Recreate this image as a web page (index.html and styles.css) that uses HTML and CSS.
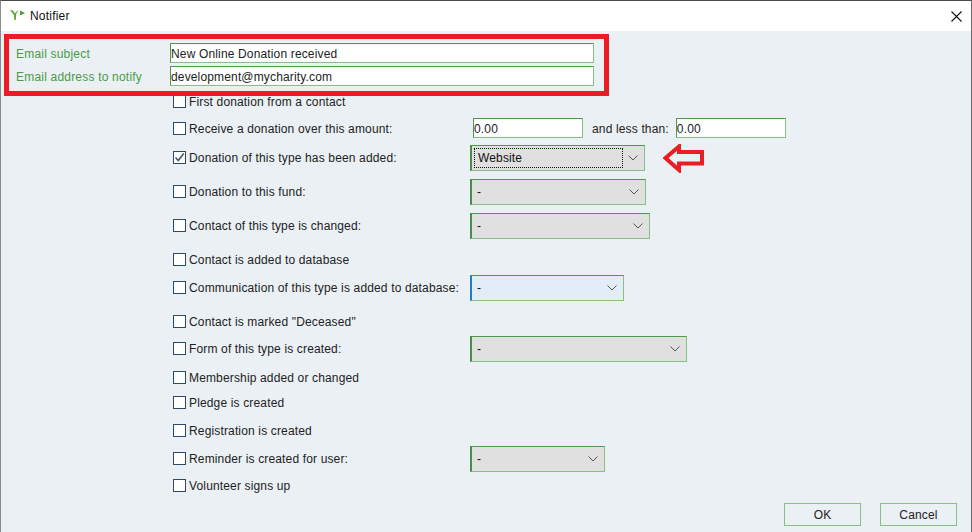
FILE: index.html
```html
<!DOCTYPE html>
<html lang="en" dir="ltr">
<head>
  <meta charset="utf-8">
  <title>Notifier</title>
  <link rel="stylesheet" href="styles.css">
</head>
<body>

  <div class="window">
    <div class="titlebar">
      <svg class="app-icon" width="16" height="12" viewBox="0 0 16 12">
        <path d="M0 1 L3 1.5 L5 4.5 L7 2 L8.5 1 L6.2 5 L5.8 11 L4.4 11 L4 6 L2 3.5 Z" fill="#5aa532"/>
        <path d="M10 1.5 L15 4 L10 6.5 Z" fill="#4d9a3c"/>
      </svg>
      <span class="title">Notifier</span>
      <svg class="close" width="11" height="11" viewBox="0 0 11 11">
        <path d="M0.5 0.5 L10.5 10.5 M10.5 0.5 L0.5 10.5" stroke="#111" stroke-width="1.1" fill="none"/>
      </svg>
    </div>

    <div class="content">
      <div class="highlight"></div>
      <svg class="red-arrow" width="42" height="29" viewBox="0 0 42 29">
        <path d="M16 2.5 L2.5 14 L16 26 L16 19.5 L39 19.5 L39 8 L16 8 Z" fill="none" stroke="#ed1c24" stroke-width="4"/>
      </svg>

      <div class="field">
        <label>Email subject</label>
        <input type="text" class="text wide" value="New Online Donation received">
      </div>
      <div class="field">
        <label>Email address to notify</label>
        <input type="text" class="text wide" value="development@mycharity.com">
      </div>

      <div class="options">
        <div class="row first">
          <span class="check"></span><span class="opt">First donation from a contact</span>
        </div>
        <div class="row gap27">
          <span class="check"></span><span class="opt">Receive a donation over this amount:</span>
          <input type="text" class="text amount first-amount" value="0.00">
          <span class="less">and less than:</span>
          <input type="text" class="text amount" value="0.00">
        </div>
        <div class="row gap29">
          <span class="check checked">
            <svg width="11" height="11" viewBox="0 0 11 11"><path d="M1.5 5.5 L4.2 8.5 L9.8 1.5" fill="none" stroke="#44586c" stroke-width="1.6"/></svg>
          </span><span class="opt">Donation of this type has been added:</span>
          <div class="select w175 focused"><span class="dotted">Website</span><svg class="chev" width="10" height="6" viewBox="0 0 10 6"><path d="M0.5 0.5 L5 5 L9.5 0.5" fill="none" stroke="#555" stroke-width="1"/></svg></div>
        </div>
        <div class="row gap34">
          <span class="check"></span><span class="opt">Donation to this fund:</span>
          <div class="select w176"><span>-</span><svg class="chev" width="10" height="6" viewBox="0 0 10 6"><path d="M0.5 0.5 L5 5 L9.5 0.5" fill="none" stroke="#555" stroke-width="1"/></svg></div>
        </div>
        <div class="row gap34">
          <span class="check"></span><span class="opt">Contact of this type is changed:</span>
          <div class="select w180"><span>-</span><svg class="chev" width="10" height="6" viewBox="0 0 10 6"><path d="M0.5 0.5 L5 5 L9.5 0.5" fill="none" stroke="#555" stroke-width="1"/></svg></div>
        </div>
        <div class="row gap34">
          <span class="check"></span><span class="opt">Contact is added to database</span>
        </div>
        <div class="row gap28">
          <span class="check"></span><span class="opt">Communication of this type is added to database:</span>
          <div class="select w154 active"><span>-</span><svg class="chev" width="10" height="6" viewBox="0 0 10 6"><path d="M0.5 0.5 L5 5 L9.5 0.5" fill="none" stroke="#555" stroke-width="1"/></svg></div>
        </div>
        <div class="row gap34">
          <span class="check"></span><span class="opt">Contact is marked "Deceased"</span>
        </div>
        <div class="row gap27">
          <span class="check"></span><span class="opt">Form of this type is created:</span>
          <div class="select w217"><span>-</span><svg class="chev" width="10" height="6" viewBox="0 0 10 6"><path d="M0.5 0.5 L5 5 L9.5 0.5" fill="none" stroke="#555" stroke-width="1"/></svg></div>
        </div>
        <div class="row gap29">
          <span class="check"></span><span class="opt">Membership added or changed</span>
        </div>
        <div class="row gap25">
          <span class="check"></span><span class="opt">Pledge is created</span>
        </div>
        <div class="row gap28">
          <span class="check"></span><span class="opt">Registration is created</span>
        </div>
        <div class="row gap28">
          <span class="check"></span><span class="opt">Reminder is created for user:</span>
          <div class="select w135"><span>-</span><svg class="chev" width="10" height="6" viewBox="0 0 10 6"><path d="M0.5 0.5 L5 5 L9.5 0.5" fill="none" stroke="#555" stroke-width="1"/></svg></div>
        </div>
        <div class="row gap27">
          <span class="check"></span><span class="opt">Volunteer signs up</span>
        </div>
      </div>

      <div class="buttons">
        <button class="btn">OK</button>
        <button class="btn">Cancel</button>
      </div>
    </div>
  </div>

</body>
</html>
```

FILE: styles.css
```css
* {
  padding: 0;
  margin: 0;
  box-sizing: border-box;
}

html, body {
  width: 972px;
  height: 532px;
  overflow: hidden;
}

body {
  background: #ebf0f5;
  font-family: "Liberation Sans", Arial, sans-serif;
  font-size: 12px;
  letter-spacing: 0.15px;
  color: #222;
}

.window {
  width: 972px;
  height: 532px;
  display: flex;
  flex-direction: column;
  border-top: 1px solid #4a4a4a;
  border-left: 1px solid #8a8a8a;
  border-right: 1px solid #6a6a6a;
}

.titlebar {
  height: 30px;
  flex-shrink: 0;
  background: #fff;
  display: flex;
  align-items: center;
  padding: 0 9px 0 9px;
  color: #111;
}

.app-icon {
  margin-right: 4px;
  margin-top: -2px;
}

.title {
  flex: 1;
  letter-spacing: 0.2px;
}

.content {
  position: relative;
  flex: 1;
  padding: 12px 0 0 15px;
}

/* annotations painted over the screenshot */
.highlight {
  position: absolute;
  left: 3px;
  top: 3px;
  width: 605px;
  height: 62px;
  border: 5px solid #ed1c24;
  pointer-events: none;
}

.red-arrow {
  position: absolute;
  left: 662px;
  top: 113px;
}

.field {
  display: flex;
  align-items: center;
  height: 20px;
  margin-bottom: 3px;
}

.field label {
  width: 154px;
  padding-top: 2px;
  color: #4a9a46;
  letter-spacing: 0.2px;
}

.text {
  height: 20px;
  background: #fff;
  border: 1px solid #85c085;
  border-top-color: #4a9a46;
  border-left-color: #4a9a46;
  outline: 0;
  padding: 1px 0 0 0;
  font: inherit;
  letter-spacing: inherit;
  color: #222;
}

.wide {
  width: 424px;
}

.options {
  padding-left: 157px;
  margin-top: 4px;
}

.row {
  display: flex;
  align-items: center;
  height: 24px;
}

.gap25 { margin-top: 1px; }
.gap27 { margin-top: 3px; }
.gap28 { margin-top: 4px; }
.gap29 { margin-top: 5px; }
.gap34 { margin-top: 10px; }

.check {
  width: 13px;
  height: 13px;
  flex-shrink: 0;
  margin-top: -2px;
  background: #fff;
  border: 1px solid #2b4a6b;
  display: flex;
  align-items: center;
  justify-content: center;
}

.opt {
  margin-left: 3px;
  width: 282px;
  flex-shrink: 0;
  white-space: nowrap;
}

.amount {
  width: 110px;
  margin-top: -2px;
}

.first-amount {
  margin-left: 2px;
}

.less {
  margin: 0 7px 0 9px;
  white-space: nowrap;
}

.select {
  height: 26px;
  flex-shrink: 0;
  background: #e0e0e0;
  border: 1px solid #85c085;
  border-top-color: #4a9a46;
  border-left: 2px solid #4d8a4d;
  display: flex;
  align-items: center;
  justify-content: space-between;
  padding: 0 6px 0 5px;
  margin-left: -1px;
}

.select span {
  color: #111;
}

.w135 { width: 135px; }
.w154 { width: 154px; }
.w175 { width: 175px; }
.w176 { width: 176px; }
.w180 { width: 180px; }
.w217 { width: 217px; }

.active {
  background: #e3edf7;
  border-left-color: #1f7fc4;
}

.focused {
  padding-left: 2px;
}

.focused .dotted {
  width: 149px;
  height: 20px;
  line-height: 18px;
  border: 1px dotted #111;
  padding-left: 3px;
}

.buttons {
  position: absolute;
  right: 14px;
  bottom: 6px;
  display: flex;
  gap: 19px;
}

.btn {
  width: 77px;
  height: 23px;
  background: #ebf0f5;
  border: 1px solid #85c085;
  font: inherit;
  letter-spacing: inherit;
  color: #222;
}
```
